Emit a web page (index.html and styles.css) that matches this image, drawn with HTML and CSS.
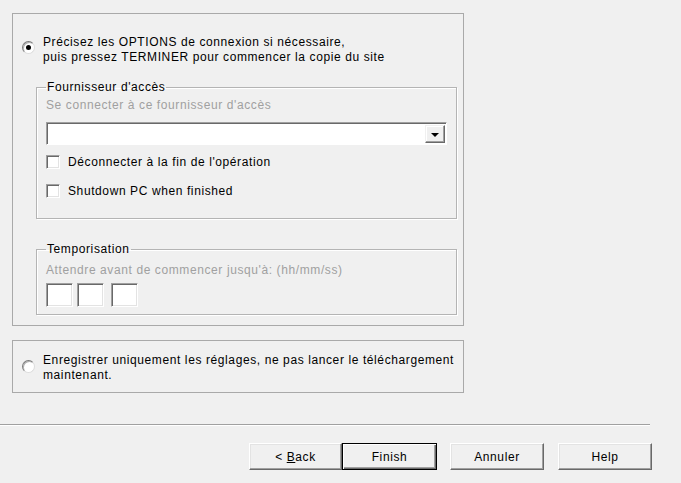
FILE: index.html
```html
<!DOCTYPE html>
<html>
<head>
<meta charset="utf-8">
<link rel="stylesheet" href="styles.css">
</head>
<body>
<div class="page">
  <div class="panel panel-main">
    <div class="opt-row">
      <span class="radio checked"><span class="dot"></span></span>
      <div class="opt-text">Précisez les OPTIONS de connexion si nécessaire,<br>puis pressez TERMINER pour commencer la copie du site</div>
    </div>
    <fieldset class="group group-isp">
      <legend>Fournisseur d'accès</legend>
      <div class="hint hint-isp">Se connecter à ce fournisseur d'accès</div>
      <div class="combo">
        <div class="combo-field"></div>
        <div class="combo-btn"><span class="arrow"></span></div>
      </div>
      <label class="check-row first"><span class="checkbox"></span>Déconnecter à la fin de l'opération</label>
      <label class="check-row second"><span class="checkbox"></span>Shutdown PC when finished</label>
    </fieldset>
    <fieldset class="group group-time">
      <legend>Temporisation</legend>
      <div class="hint hint-time">Attendre avant de commencer jusqu'à: (hh/mm/ss)</div>
      <div class="time-boxes">
        <span class="tbox"></span><span class="tbox"></span><span class="tbox third"></span>
      </div>
    </fieldset>
  </div>
  <div class="panel panel-second">
    <div class="opt-row">
      <span class="radio"></span>
      <div class="opt-text">Enregistrer uniquement les réglages, ne pas lancer le téléchargement<br>maintenant.</div>
    </div>
  </div>
  <div class="separator"></div>
  <div class="buttons">
    <button class="btn btn-back">&lt; <u>B</u>ack</button>
    <button class="btn btn-default">Finish</button>
    <button class="btn btn-cancel">Annuler</button>
    <button class="btn btn-help">Help</button>
  </div>
</div>
</body>
</html>
```

FILE: styles.css
```css
* { box-sizing: border-box; }
html, body {
  margin: 0;
  padding: 0;
  background: #f0f0f0;
}
body {
  font-family: "Liberation Sans", Arial, sans-serif;
  font-size: 12px;
  letter-spacing: 0.6px;
  color: #000;
  width: 681px;
  height: 483px;
  overflow: hidden;
}
.page {
  padding-top: 13px;
}
.panel {
  margin-left: 12px;
  width: 452px;
  border: 1px solid #a9a9a9;
}
.panel-main {
  height: 313px;
  padding-top: 21px;
}
.panel-second {
  margin-top: 14px;
  height: 53px;
  padding-top: 12px;
}
.opt-row {
  display: flex;
  align-items: flex-start;
}
.opt-text {
  line-height: 15px;
  margin-left: 8px;
}
.radio {
  position: relative;
  flex: none;
  width: 13px;
  height: 13px;
  margin-left: 9px;
  margin-top: 6px;
  border-radius: 50%;
  background: #fff;
  border: 1px solid;
  border-color: #7a7a7a #dcdcdc #dcdcdc #7a7a7a;
  box-shadow: inset 1px 1px 0 #b0b0b0;
}
.panel-second .radio { margin-top: 7px; }
.radio .dot {
  position: absolute;
  left: 3px;
  top: 3px;
  width: 5px;
  height: 5px;
  border-radius: 50%;
  background: #000;
}
.group {
  margin: 15px 0 0 23px;
  width: 421px;
  padding: 0 9px;
  border: 1px solid #b4b4b4;
  box-shadow: inset 1px 1px 0 #fff, 1px 1px 0 #fff;
}
.group legend {
  padding: 0 1px;
  margin-left: 0;
  line-height: 14px;
}
.group-isp { padding-bottom: 20px; }
.group-time {
  margin-top: 23px;
  padding-bottom: 7px;
}
.hint {
  color: #a0a0a0;
  line-height: 14px;
}
.hint-isp { margin-top: 4px; }
.hint-time { margin-top: 7px; }
.combo {
  display: flex;
  margin-top: 10px;
  width: 401px;
  height: 23px;
  background: #fff;
  border: 1px solid;
  border-color: #a0a0a0 #fff #fff #a0a0a0;
  box-shadow: inset 1px 1px 0 #696969;
  padding: 2px 1px 1px 2px;
}
.combo-field { flex: 1; }
.combo-btn {
  width: 20px;
  display: flex;
  align-items: center;
  justify-content: center;
  background: #f0f0f0;
  border: 1px solid;
  border-color: #f0f0f0 #696969 #696969 #f0f0f0;
  box-shadow: inset -1px -1px 0 #a0a0a0, inset 1px 1px 0 #fff;
}
.arrow {
  width: 0;
  height: 0;
  border-left: 4px solid transparent;
  border-right: 4px solid transparent;
  border-top: 4px solid #000;
  margin-top: 1px;
}
.check-row {
  display: flex;
  align-items: center;
  height: 14px;
  line-height: 14px;
}
.check-row.first { margin-top: 10px; }
.check-row.second { margin-top: 15px; }
.checkbox {
  flex: none;
  width: 14px;
  height: 14px;
  margin-right: 8px;
  background: #fff;
  border: 1px solid;
  border-color: #a0a0a0 #fff #fff #a0a0a0;
  box-shadow: inset 1px 1px 0 #696969, inset -1px -1px 0 #e3e3e3;
}
.time-boxes {
  display: flex;
  gap: 4px;
  margin-top: 6px;
}
.tbox {
  width: 27px;
  height: 24px;
  background: #fff;
  border: 1px solid;
  border-color: #a0a0a0 #fff #fff #a0a0a0;
  box-shadow: inset 1px 1px 0 #696969, inset -1px -1px 0 #e3e3e3;
}
.tbox.third { margin-left: 3px; }
.separator {
  margin-top: 31px;
  width: 650px;
  height: 2px;
  border-top: 1px solid #a0a0a0;
  border-bottom: 1px solid #fff;
}
.buttons {
  display: flex;
  margin-top: 17px;
  padding-left: 249px;
}
.btn {
  font-family: "Liberation Sans", Arial, sans-serif;
  font-size: 12px;
  letter-spacing: 0.6px;
  color: #000;
  width: 93px;
  height: 27px;
  padding: 0;
  background: #f0f0f0;
  border: 1px solid;
  border-color: #fff #696969 #696969 #fff;
  box-shadow: inset -1px -1px 0 #a0a0a0, inset 1px 1px 0 #e3e3e3;
  border-radius: 0;
}
.btn u { text-decoration: underline; }
.btn-default {
  width: 95px;
  margin-left: 0;
  border: 1px solid #000;
  box-shadow: inset 1px 1px 0 #fff, inset -1px -1px 0 #696969, inset -2px -2px 0 #a0a0a0;
}
.btn-cancel { margin-left: 13px; width: 94px; }
.btn-help { margin-left: 14px; width: 94px; }
```
